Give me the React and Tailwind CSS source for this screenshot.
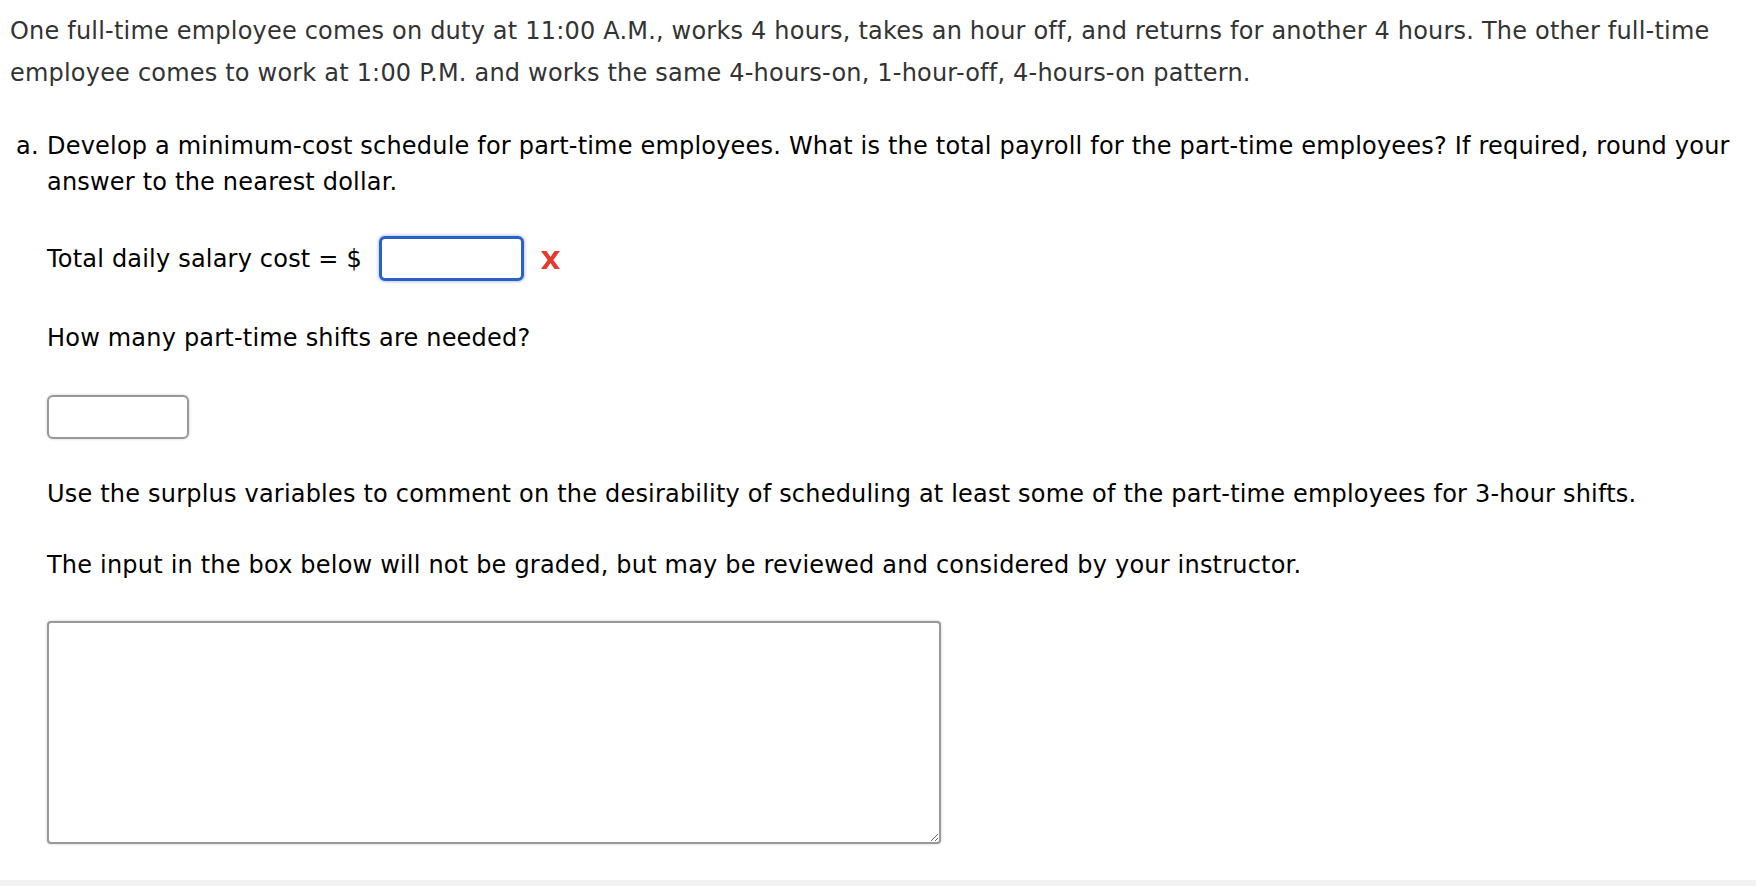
export default function App() {
  return (
    <div className="w-[1756px] h-[886px] bg-white flex flex-col overflow-hidden tracking-[0.2px]" style={{ fontFamily: '"DejaVu Sans", Verdana, sans-serif' }}>
      <div className="flex-1 pl-[10px] pr-[4px] pt-[10px]">
        <p className="text-[24px] leading-[42px] text-[#333]">
          One full-time employee comes on duty at 11:00 A.M., works 4 hours, takes an hour off, and returns for another 4 hours. The other full-time employee comes to work at 1:00 P.M. and works the same 4-hours-on, 1-hour-off, 4-hours-on pattern.
        </p>
        <div className="mt-[34px] flex text-[24px] leading-[36px] text-black">
          <span className="ml-[6px] w-[31px] shrink-0">a.</span>
          <div className="flex-1 flex flex-col">
            <p>
              Develop a minimum-cost schedule for part-time employees. What is the total payroll for the part-time employees? If required, round your answer to the nearest dollar.
            </p>
            <div className="mt-[36px] flex items-center">
              <span>Total daily salary cost = $</span>
              <input
                type="text"
                className="ml-[17px] w-[145px] h-[45px] rounded-[6px] border-[3px] border-[#2b61c6] bg-white outline-none shadow-[0_0_3px_1px_rgba(43,97,198,0.35)]"
              />
              <svg className="ml-[16px] mt-[2px]" width="21" height="20" viewBox="0 0 21 20">
                <path d="M1 1 L6.5 1 L10.5 7 L14.5 1 L20 1 L13.3 10 L20 19 L14.5 19 L10.5 13 L6.5 19 L1 19 L7.7 10 Z" fill="#e8392f" />
              </svg>
            </div>
            <p className="mt-[39px]">How many part-time shifts are needed?</p>
            <input
              type="text"
              className="mt-[39px] w-[142px] h-[44px] rounded-[6px] border-2 border-[#999] bg-white outline-none shadow-[0_0_3px_rgba(0,0,0,0.2)]"
            />
            <p className="mt-[37px]">Use the surplus variables to comment on the desirability of scheduling at least some of the part-time employees for 3-hour shifts.</p>
            <p className="mt-[35px]">The input in the box below will not be graded, but may be reviewed and considered by your instructor.</p>
            <textarea className="mt-[38px] w-[894px] h-[223px] rounded-[4px] border-2 border-[#999] bg-white outline-none shadow-[0_0_3px_rgba(0,0,0,0.2)]" />
          </div>
        </div>
      </div>
      <div className="h-[6px] bg-[#f2f2f2] shrink-0" />
    </div>
  );
}
